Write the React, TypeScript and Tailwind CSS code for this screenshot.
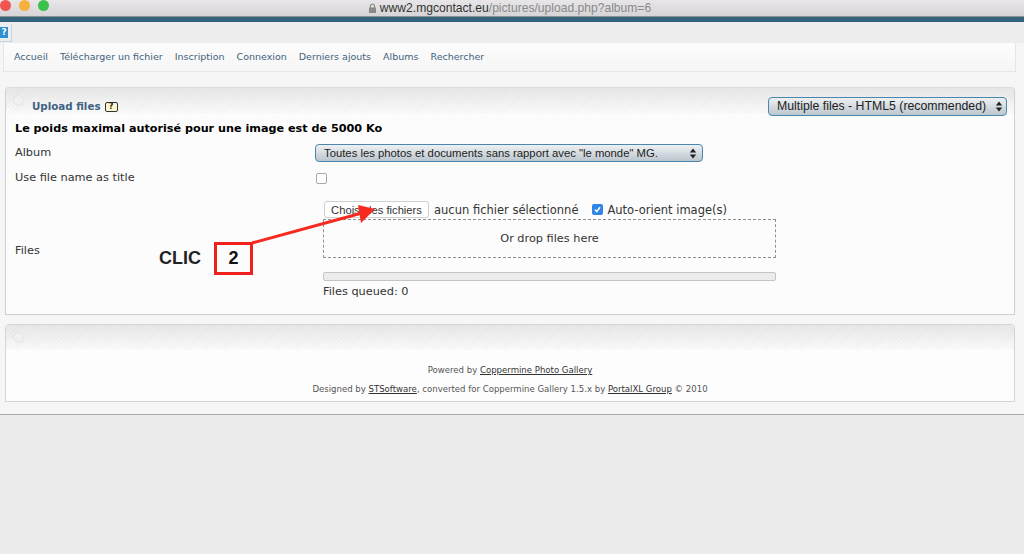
const stripes = "bg-[repeating-linear-gradient(135deg,#00000005_0,#00000005_1px,transparent_1px,transparent_3px),linear-gradient(#e7e7e7,#fbfbfb)]";

function Dot({ className }: { className: string }) {
  return <span className={`h-[11px] w-[11px] rounded-full ${className}`} />;
}

function Radio() {
  return <span className="absolute left-[7px] top-[7px] h-[11px] w-[11px] rounded-full border border-[#e4e4e4] bg-[#f0f0f0]" />;
}

function FakeSelect({ text, className }: { text: string; className: string }) {
  return (
    <div className={`flex items-center justify-between whitespace-nowrap rounded-[4px] border border-[#4a86ad] bg-gradient-to-b from-[#eef1f3] to-[#bcc6ce] pl-2 pr-[3px] font-['Liberation_Sans',sans-serif] text-[#222] ${className}`}>
      <span>{text}</span>
      <svg width="8" height="11" viewBox="0 0 8 11" className="fill-[#222]">
        <path d="M4 0.5 7.2 4.4H0.8ZM4 10.5 0.8 6.6H7.2Z" />
      </svg>
    </div>
  );
}

export default function App() {
  const nav = ["Accueil", "Télécharger un fichier", "Inscription", "Connexion", "Derniers ajouts", "Albums", "Rechercher"];

  return (
    <div className="relative h-[554px] w-[1024px] overflow-hidden bg-[#ececec] font-['DejaVu_Sans',sans-serif] text-[#222]">
      {/* safari title bar */}
      <div className="relative flex h-[17px] items-center justify-center border-b border-[#8f8f8f] bg-gradient-to-b from-[#e8e6e8] to-[#d6d4d6] pr-[5px] font-['Liberation_Sans',sans-serif] text-[12.1px]">
        <div className="absolute left-0 top-0 flex gap-[8px]">
          <Dot className="bg-[#f2544f]" />
          <Dot className="bg-[#f6b13c]" />
          <Dot className="bg-[#3cc24a]" />
        </div>
        <svg width="9" height="10" viewBox="0 0 9 10" className="mr-[3px] fill-[#8a8a8a]">
          <path d="M1 4.5h.9V3a2.6 2.6 0 0 1 5.2 0v1.5H8V10H1ZM3 4.5h3V3a1.5 1.5 0 0 0-3 0Z" />
        </svg>
        <span className="text-[#333]">www2.mgcontact.eu</span>
        <span className="text-[#8a8a8a]">/pictures/upload.php?album=6</span>
      </div>
      <div className="h-[5px] bg-[#33627f]" />

      <div className="h-[392px] bg-[#f6f6f6]">
        {/* help strip */}
        <div className="h-[21px] bg-[#ededed] pt-[2px]">
          <div className="flex h-[18px] w-[12px] items-center justify-start border-b border-r border-[#c8d4dc] bg-[#e8eef2]">
            <span className="flex h-[11px] w-[8px] items-center justify-center bg-[#2f8fd0] text-[9px] font-bold leading-none text-white">?</span>
          </div>
        </div>

        {/* nav */}
        <nav className="ml-[3px] flex h-[29px] w-[1013px] items-center gap-[12px] border-b border-l border-r border-[#e6e6e6] bg-gradient-to-b from-[#fcfcfc] to-[#f6f6f6] pl-[10px] text-[9.5px] text-[#41627c]">
          {nav.map((n) => (
            <span key={n}>{n}</span>
          ))}
        </nav>

        {/* upload panel */}
        <section className="relative ml-[5px] mt-[15px] h-[228px] w-[1010px] rounded-t-[4px] border border-[#cfcfcf] border-t-[#dcdcdc] bg-[#fcfcfc]">
          <div className={`absolute inset-x-0 top-0 h-[26px] rounded-t-[3px] ${stripes}`} />
          <Radio />
          <div className="relative flex h-[26px] items-center justify-between pl-[26px] pr-[7px]">
            <div className="flex items-center gap-[4px] pt-[12px]">
              <span className="text-[10.3px] font-bold text-[#3f6382]">Upload files</span>
              <span className="flex h-[10px] w-[13px] items-center justify-center rounded-[2px] border border-[#333] bg-[#fdf6cf] text-[8px] font-bold leading-none">?</span>
            </div>
            <FakeSelect text="Multiple files - HTML5 (recommended)" className="mt-[10px] h-[19px] w-[239px] text-[12.3px]" />
          </div>

          <p className="mt-[7px] pl-[9px] text-[11.2px] font-bold leading-[16px] text-black">Le poids maximal autorisé pour une image est de 5000 Ko</p>

          <div className="mt-[7px] grid grid-cols-[300px_1fr] pl-[9px] text-[11.3px] leading-[16px] text-[#333]">
            <div className="flex h-[17px] items-center">Album</div>
            <FakeSelect text={'Toutes les photos et documents sans rapport avec "le monde" MG.'} className="h-[18px] w-[388px] pr-[5px] text-[11.3px]" />

            <div className="mt-[8px] flex h-[16px] items-center">Use file name as title</div>
            <div className="mt-[8px] flex h-[16px] items-center pl-[1px]">
              <span className="h-[11px] w-[11px] rounded-[2px] border border-[#a8a8a8] bg-white" />
            </div>

            <div className="mt-[14px] flex items-center pt-[2px]">Files</div>
            <div className="ml-[8px] mt-[14px] w-[453px]">
              <div className="flex h-[19px] items-center">
                <span className="ml-[1px] flex h-[17px] w-[105px] items-center justify-center rounded-[3px] border border-[#d0d0d0] bg-white font-['Liberation_Sans',sans-serif] text-[11.2px]">Choisir les fichiers</span>
                <span className="ml-[5px] whitespace-nowrap text-[11.5px]">aucun fichier sélectionné</span>
                <span className="ml-[14px] flex h-[11px] w-[11px] items-center justify-center rounded-[2px] bg-[#2f86e8]">
                  <svg width="9" height="9" viewBox="0 0 9 9" fill="none" stroke="#fff" strokeWidth="1.6">
                    <path d="M2 4.6 3.8 6.6 7 2.2" />
                  </svg>
                </span>
                <span className="ml-[4px] whitespace-nowrap text-[11.5px]">Auto-orient image(s)</span>
              </div>
              <div className="flex h-[39px] items-center justify-center border border-dashed border-[#8f8f8f] pt-[1px]">Or drop files here</div>
              <div className="mt-[14px] h-[9px] rounded-[2px] border border-[#c4c4c4] bg-[#ececec]" />
              <div className="mt-[3px]">Files queued: 0</div>
            </div>
          </div>
        </section>

        {/* footer panel */}
        <section className="relative ml-[5px] mt-[9px] h-[78px] w-[1010px] rounded-t-[4px] border border-[#d4d4d4] bg-[#fdfdfd]">
          <div className={`absolute inset-x-0 top-0 h-[25px] rounded-t-[3px] ${stripes}`} />
          <Radio />
          <div className="relative pt-[40px] text-center text-[8.55px] leading-[11px] text-[#555]">
            <p>
              Powered by <span className="text-[#333] underline">Coppermine Photo Gallery</span>
            </p>
            <p className="mt-[8px]">
              Designed by <span className="text-[#333] underline">STSoftware</span>, converted for Coppermine Gallery 1.5.x by <span className="text-[#333] underline">PortalXL Group</span> © 2010
            </p>
          </div>
        </section>
      </div>

      <div className="h-[141px] border-t border-[#a8a8a8] bg-[#ebebeb]" />

      {/* annotation over the page */}
      <span className="absolute left-[159px] top-[249px] font-['Liberation_Sans',sans-serif] text-[18px] font-bold leading-[18px] text-[#222]">CLIC</span>
      <div className="absolute left-[214px] top-[242px] flex h-[33px] w-[39px] items-center justify-center border-[3px] border-[#f0211c] font-['Liberation_Sans',sans-serif] text-[18px] font-bold text-[#111]">2</div>
      <svg width="1024" height="554" className="pointer-events-none absolute left-0 top-0">
        <path d="M252 243 362 213" stroke="#f8291f" strokeWidth="3" fill="none" />
        <path d="M375 209 358 205 361 223Z" fill="#f8291f" />
      </svg>
    </div>
  );
}
